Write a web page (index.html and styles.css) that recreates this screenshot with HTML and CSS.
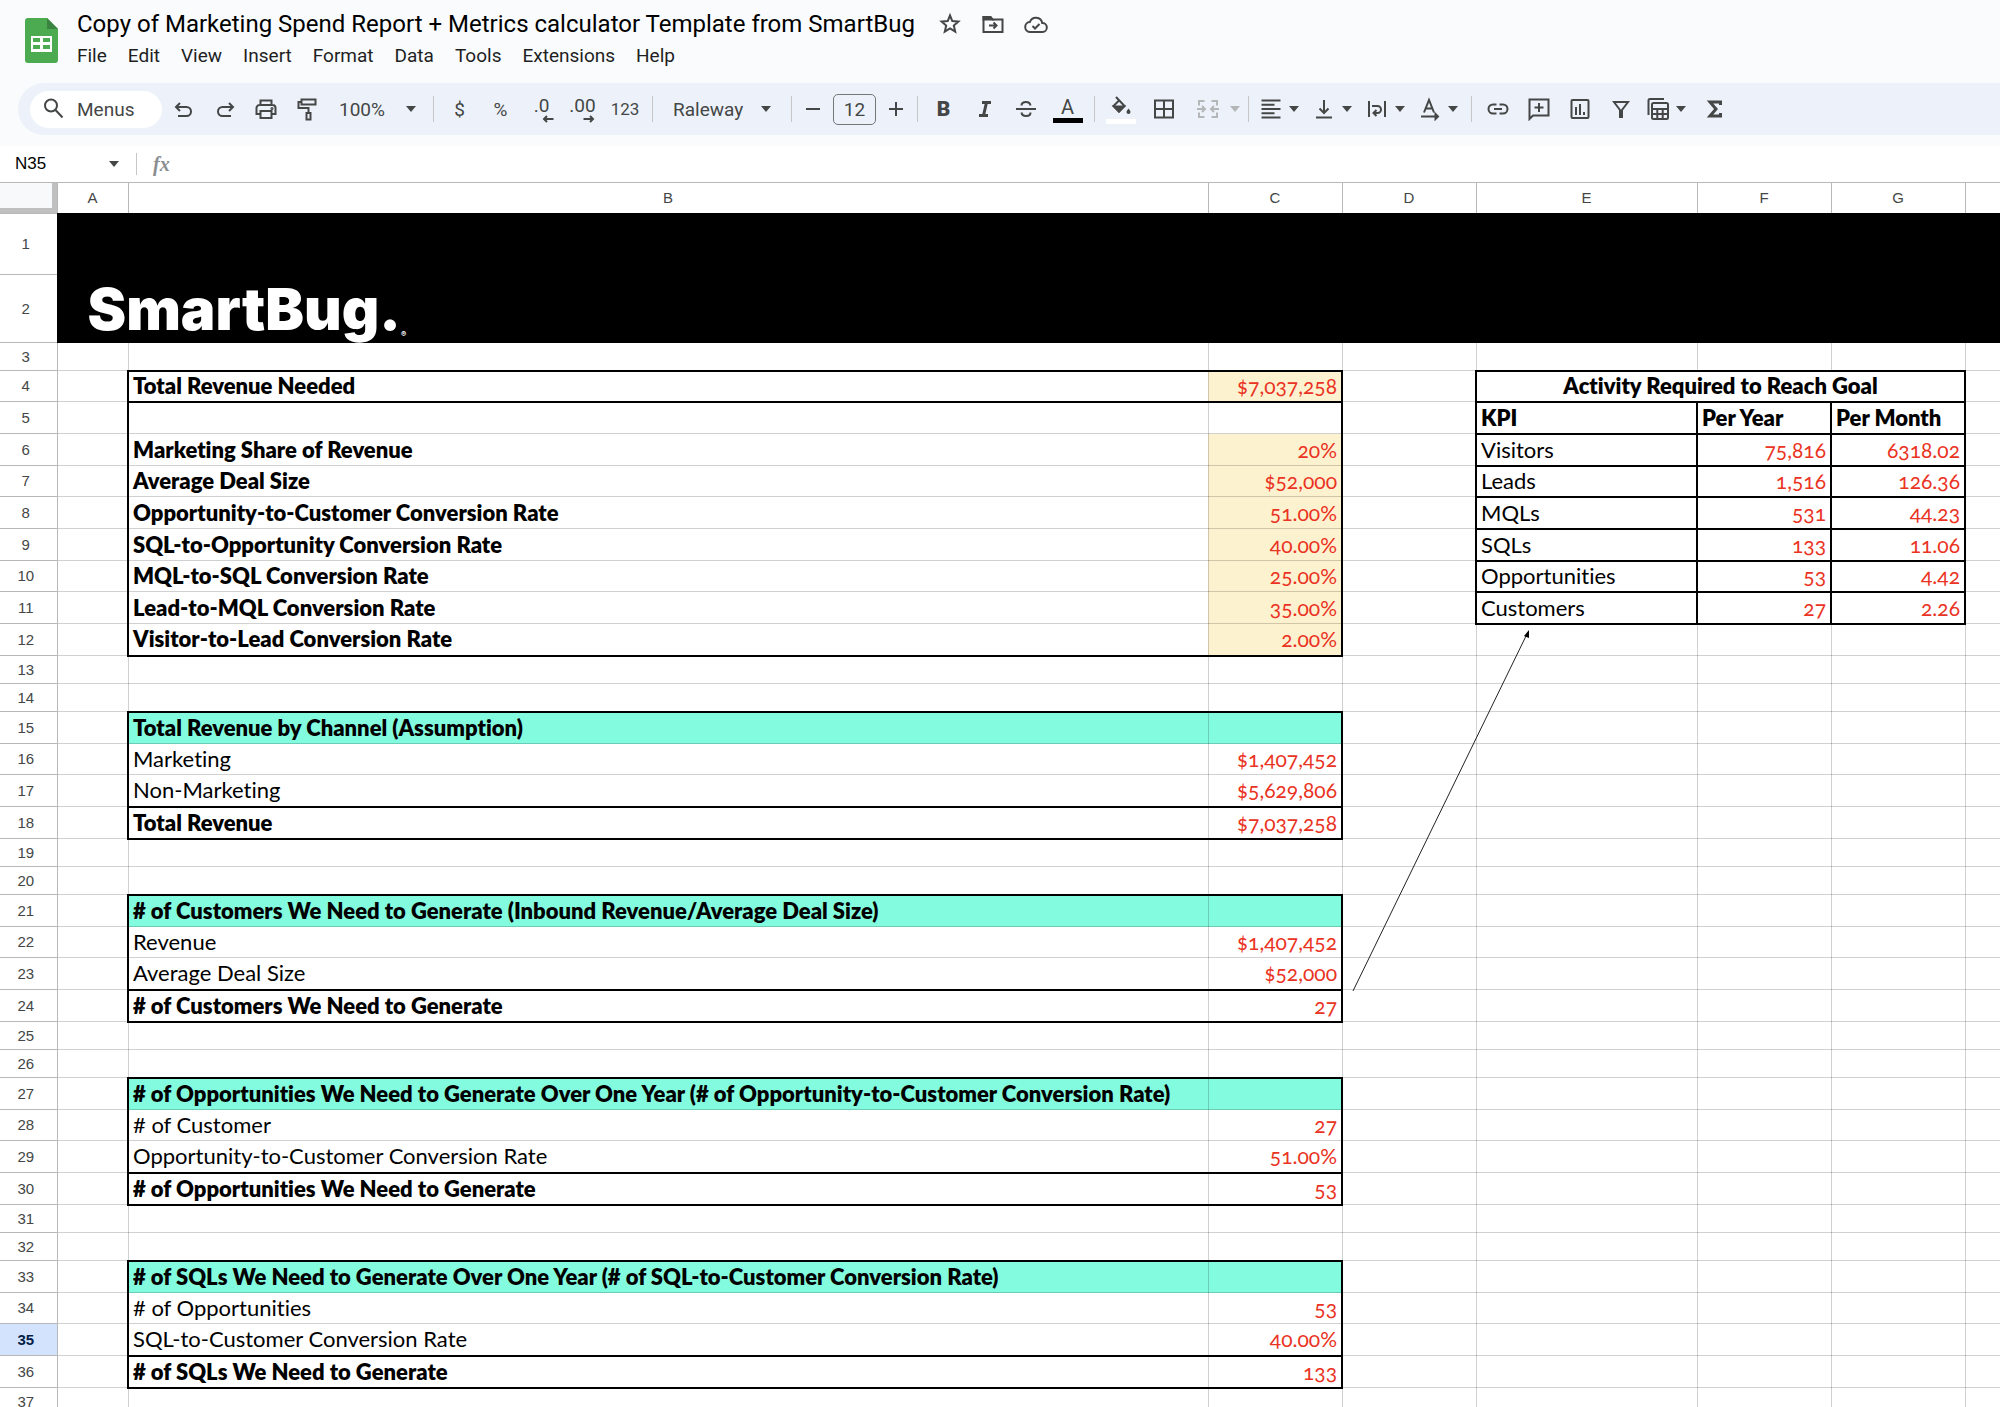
FILE: index.html
```html
<!DOCTYPE html>
<html lang="en">
<head>
<meta charset="utf-8">
<title>Copy of Marketing Spend Report + Metrics calculator Template from SmartBug</title>
<link rel="stylesheet" href="styles.css">
</head>
<body>
<svg class="defs" aria-hidden="true"><symbol id="caret" viewBox="0 0 10 6"><path d="M0 0h10L5 6z" fill="currentColor"/></symbol></svg>
<div class="app">
<header class="top">
  <svg class="doc-logo" viewBox="0 0 33 45" aria-hidden="true"><path d="M3 0h19l11 11v31a3 3 0 0 1-3 3H3a3 3 0 0 1-3-3V3a3 3 0 0 1 3-3z" fill="#4caa50"/><path d="M22 0l11 11H22z" fill="#3a8340"/><path d="M6 18h21v16H6z" fill="#fff"/><path d="M8 20h7v4H8zM18 20h7v4h-7zM8 27h7v4H8zM18 27h7v4h-7z" fill="#4caa50"/></svg>
  <div class="top-main">
    <div class="title-row">
      <h1>Copy of Marketing Spend Report + Metrics calculator Template from SmartBug</h1>
      <button class="mini" aria-label="Star"><svg viewBox="0 0 24 24"><path d="M12 3.500l2.300 5.600 6.100.5-4.600 4 1.400 6-5.200-3.200-5.200 3.200 1.400-6-4.600-4 6.100-.5z"/></svg></button>
      <button class="mini" aria-label="Move"><svg viewBox="0 0 24 24"><path d="M2.500 20V5h7l2 2.500h10V20z"/><path d="M2.500 5h7l2 2.500h-9z" fill="currentColor"/><path d="M8 13.500h7M12.500 10.500l3 3-3 3"/></svg></button>
      <button class="mini" aria-label="Saved to Drive"><svg viewBox="0 0 24 24"><path d="M6.500 20a5 5 0 0 1-.6-10A6.400 6.400 0 0 1 18.200 11a4.500 4.500 0 0 1 .3 9z"/><path d="M8.500 14l2.500 2.500 4.500-4.500"/></svg></button>
    </div>
    <nav class="menu"><button>File</button><button>Edit</button><button>View</button><button>Insert</button><button>Format</button><button>Data</button><button>Tools</button><button>Extensions</button><button>Help</button></nav>
  </div>
</header>

<div class="toolbar" role="toolbar">
  <label class="search"><svg viewBox="0 0 24 24"><circle cx="9" cy="8.500" r="6"/><path d="M13.500 13l7 7.500"/></svg><input type="text" placeholder="Menus" aria-label="Menus"></label>
  <button aria-label="Undo"><svg viewBox="0 0 24 24"><path d="M8 6L4 10l4 4M4.500 10h10a4.500 4.500 0 0 1 0 9H6"/></svg></button>
  <button aria-label="Redo"><svg viewBox="0 0 24 24"><path d="M16 6l4 4-4 4M19.500 10h-10a4.500 4.500 0 0 0 0 9H18"/></svg></button>
  <button aria-label="Print"><svg viewBox="0 0 24 24"><path d="M6.500 8V3.500h11V8M6.500 17H2.500v-6a3 3 0 0 1 3-3h13a3 3 0 0 1 3 3v6h-4M6.500 14h11v7h-11z"/><circle cx="18" cy="11.500" r=".6"/></svg></button>
  <button aria-label="Paint format"><svg viewBox="0 0 24 24"><path d="M6.500 2.500h14v5h-14zM6.500 5H3.500v6h10v4.500M11.500 16h4v6.500h-4z"/></svg></button>
  <span class="pick zoom"><select aria-label="Zoom"><option>100%</option></select><svg class="caret"><use href="#caret"/></svg></span>
  <i class="sep"></i>
  <button aria-label="Format as currency">$</button>
  <button aria-label="Format as percent">%</button>
  <button class="dec" aria-label="Decrease decimal places">.0<svg viewBox="0 0 12 8"><path d="M11.500 4H2M5 1L2 4l3 3"/></svg></button>
  <button class="dec" aria-label="Increase decimal places">.00<svg viewBox="0 0 12 8"><path d="M.5 4H10M7 1l3 3-3 3"/></svg></button>
  <button class="num" aria-label="More formats">123</button>
  <i class="sep"></i>
  <span class="pick font"><select aria-label="Font"><option>Raleway</option></select><svg class="caret"><use href="#caret"/></svg></span>
  <i class="sep"></i>
  <button class="step" aria-label="Decrease font size"><svg viewBox="0 0 24 24"><path d="M5 12h14"/></svg></button>
  <input class="size" type="text" value="12" aria-label="Font size">
  <button class="step" aria-label="Increase font size"><svg viewBox="0 0 24 24"><path d="M5 12h14M12 5v14"/></svg></button>
  <i class="sep"></i>
  <button class="bold" aria-label="Bold">B</button>
  <button aria-label="Italic"><svg viewBox="0 0 24 24" class="heavy"><path d="M9 5.500h9M6 18.500h9M13.500 5.500l-3 13"/></svg></button>
  <button aria-label="Strikethrough"><svg viewBox="0 0 24 24"><path d="M2 12h20M16.500 8.500c-.3-2-2-3.500-4.500-3.500S7.500 6.300 7.500 8.500M7.500 15.500c.3 2 2 3.500 4.500 3.500s4.500-1.300 4.500-3.500"/></svg></button>
  <button class="ink" aria-label="Text color">A</button>
  <i class="sep"></i>
  <button class="fill" aria-label="Fill color"><svg viewBox="0 0 24 24"><path d="M7 2l8.500 9-5.500 5.500L4.500 11 10 5.500"/><path d="M5 11.500h10L10 16.500z" fill="currentColor"/><path d="M19.500 13.500c1.500 2 2 2.800 2 3.500a2 2 0 0 1-4 0c0-.7.5-1.500 2-3.500z" fill="currentColor" stroke="none"/></svg></button>
  <button class="borders" aria-label="Borders"><svg viewBox="0 0 24 24"><path d="M3 3.500h18v17H3zM12 3.500v17M3 12h18"/></svg></button>
  <button class="wide merge" aria-label="Merge cells" disabled><svg viewBox="0 0 24 24"><path d="M8.500 4H3v4.500M15.500 4H21v4.500M8.500 20H3v-4.500M15.500 20H21v-4.500M1 12h8M6 9l3 3-3 3M23 12h-8M18 9l-3 3 3 3"/></svg><svg class="caret"><use href="#caret"/></svg></button>
  <i class="sep"></i>
  <button class="wide" aria-label="Horizontal align"><svg viewBox="0 0 24 24"><path d="M2.500 3.500h19M2.500 7.800h13M2.500 12h19M2.500 16.300h13M2.500 20.500h19"/></svg><svg class="caret"><use href="#caret"/></svg></button>
  <button class="wide" aria-label="Vertical align"><svg viewBox="0 0 24 24"><path d="M4 20.500h16M12 3v13M7.500 11.500L12 16l4.500-4.500"/></svg><svg class="caret"><use href="#caret"/></svg></button>
  <button class="wide" aria-label="Text wrapping"><svg viewBox="0 0 24 24"><path d="M4 4v16M20 4v16M7 9h5.500a3.500 3.500 0 0 1 0 7H9M11.500 13l-3 3 3 3"/></svg><svg class="caret"><use href="#caret"/></svg></button>
  <button class="wide" aria-label="Text rotation"><svg viewBox="0 0 24 24"><path d="M6 15.500L11 3l5 12.500M7.500 11.500h7M3 19.500h17M17.500 17l2.500 2.500-2.500 2.500z"/></svg><svg class="caret"><use href="#caret"/></svg></button>
  <i class="sep"></i>
  <button aria-label="Insert link"><svg viewBox="0 0 24 24"><path d="M10.500 7.500H7a4.500 4.500 0 0 0 0 9h3.500M13.500 7.500H17a4.500 4.500 0 0 1 0 9h-3.500M8 12h8"/></svg></button>
  <button aria-label="Insert comment"><svg viewBox="0 0 24 24"><path d="M2.500 22V2.500h19v16H6zM12 6v9M7.500 10.500h9"/></svg></button>
  <button aria-label="Insert chart"><svg viewBox="0 0 24 24"><rect x="3.500" y="3" width="17" height="18" rx="1"/><path d="M8 10v8M12 7v11M16 15v3"/></svg></button>
  <button aria-label="Create a filter"><svg viewBox="0 0 24 24"><path d="M5 5h14l-6 8v7h-2v-7z"/></svg></button>
  <button class="wide" aria-label="Filter views"><svg viewBox="0 0 24 24"><path d="M2.500 18V3.500a1.500 1.500 0 0 1 1.500-1.500H18"/><rect x="6" y="6" width="16" height="16" rx="1.500"/><path d="M6 12h16M6 17h16M11.300 12v10M16.700 12v10"/></svg><svg class="caret"><use href="#caret"/></svg></button>
  <button aria-label="Functions"><svg viewBox="0 0 24 24" class="heavy"><path d="M17.500 8V5H7l6 7-6 7h10.500v-3"/></svg></button>
</div>

<div class="formula">
  <input class="name" type="text" value="N35" aria-label="Name box"><svg class="caret"><use href="#caret"/></svg>
  <label for="fx">fx</label><input id="fx" type="text">
</div>

<main class="sheet">
<table>
<colgroup><col class="c-n"><col class="c-a"><col class="c-b"><col class="c-c"><col class="c-c"><col class="c-e"><col class="c-c"><col class="c-c"><col></colgroup>
<thead><tr><th class="corner"></th><th>A</th><th>B</th><th>C</th><th>D</th><th>E</th><th>F</th><th>G</th><th></th></tr></thead>
<tbody>
<tr class="r1"><th>1</th><td class="banner" colspan="8"></td></tr>
<tr class="r2"><th>2</th><td class="banner" colspan="8"><div class="brand">SmartBug.<small>®</small></div></td></tr>
<tr class="s"><th>3</th><td></td><td></td><td></td><td></td><td></td><td></td><td></td><td></td></tr>
<tr class="k"><th>4</th><td></td><td class="b l t u">Total Revenue Needed</td><td class="v y r t u">$7,037,258</td><td></td><td class="b box mid" colspan="3">Activity Required to Reach Goal</td><td></td></tr>
<tr><th>5</th><td></td><td class="l"></td><td class="r"></td><td></td><td class="b box">KPI</td><td class="b box">Per Year</td><td class="b box">Per Month</td><td></td></tr>
<tr><th>6</th><td></td><td class="b l">Marketing Share of Revenue</td><td class="v y r">20%</td><td></td><td class="box">Visitors</td><td class="v box">75,816</td><td class="v box">6318.02</td><td></td></tr>
<tr class="k"><th>7</th><td></td><td class="b l">Average Deal Size</td><td class="v y r">$52,000</td><td></td><td class="box">Leads</td><td class="v box">1,516</td><td class="v box">126.36</td><td></td></tr>
<tr><th>8</th><td></td><td class="b l">Opportunity-to-Customer Conversion Rate</td><td class="v y r">51.00%</td><td></td><td class="box">MQLs</td><td class="v box">531</td><td class="v box">44.23</td><td></td></tr>
<tr><th>9</th><td></td><td class="b l">SQL-to-Opportunity Conversion Rate</td><td class="v y r">40.00%</td><td></td><td class="box">SQLs</td><td class="v box">133</td><td class="v box">11.06</td><td></td></tr>
<tr class="k"><th>10</th><td></td><td class="b l">MQL-to-SQL Conversion Rate</td><td class="v y r">25.00%</td><td></td><td class="box">Opportunities</td><td class="v box">53</td><td class="v box">4.42</td><td></td></tr>
<tr><th>11</th><td></td><td class="b l">Lead-to-MQL Conversion Rate</td><td class="v y r">35.00%</td><td></td><td class="box">Customers</td><td class="v box">27</td><td class="v box">2.26</td><td></td></tr>
<tr><th>12</th><td></td><td class="b l u">Visitor-to-Lead Conversion Rate</td><td class="v y r u">2.00%</td><td></td><td></td><td></td><td></td><td></td></tr>
<tr class="s"><th>13</th><td></td><td></td><td></td><td></td><td></td><td></td><td></td><td></td></tr>
<tr class="s"><th>14</th><td></td><td></td><td></td><td></td><td></td><td></td><td></td><td></td></tr>
<tr><th>15</th><td></td><td class="b g l t">Total Revenue by Channel (Assumption)</td><td class="g r t"></td><td></td><td></td><td></td><td></td><td></td></tr>
<tr class="k"><th>16</th><td></td><td class="l">Marketing</td><td class="v r">$1,407,452</td><td></td><td></td><td></td><td></td><td></td></tr>
<tr><th>17</th><td></td><td class="l">Non-Marketing</td><td class="v r">$5,629,806</td><td></td><td></td><td></td><td></td><td></td></tr>
<tr><th>18</th><td></td><td class="b l t u">Total Revenue</td><td class="v r t u">$7,037,258</td><td></td><td></td><td></td><td></td><td></td></tr>
<tr class="s"><th>19</th><td></td><td></td><td></td><td></td><td></td><td></td><td></td><td></td></tr>
<tr class="s"><th>20</th><td></td><td></td><td></td><td></td><td></td><td></td><td></td><td></td></tr>
<tr><th>21</th><td></td><td class="b g l t"># of Customers We Need to Generate (Inbound Revenue/Average Deal Size)</td><td class="g r t"></td><td></td><td></td><td></td><td></td><td></td></tr>
<tr class="k"><th>22</th><td></td><td class="l">Revenue</td><td class="v r">$1,407,452</td><td></td><td></td><td></td><td></td><td></td></tr>
<tr><th>23</th><td></td><td class="l">Average Deal Size</td><td class="v r">$52,000</td><td></td><td></td><td></td><td></td><td></td></tr>
<tr><th>24</th><td></td><td class="b l t u"># of Customers We Need to Generate</td><td class="v r t u">27</td><td></td><td></td><td></td><td></td><td></td></tr>
<tr class="s"><th>25</th><td></td><td></td><td></td><td></td><td></td><td></td><td></td><td></td></tr>
<tr class="s"><th>26</th><td></td><td></td><td></td><td></td><td></td><td></td><td></td><td></td></tr>
<tr><th>27</th><td></td><td class="b g l t"># of Opportunities We Need to Generate Over One Year (# of Opportunity-to-Customer Conversion Rate)</td><td class="g r t"></td><td></td><td></td><td></td><td></td><td></td></tr>
<tr class="k"><th>28</th><td></td><td class="l"># of Customer</td><td class="v r">27</td><td></td><td></td><td></td><td></td><td></td></tr>
<tr><th>29</th><td></td><td class="l">Opportunity-to-Customer Conversion Rate</td><td class="v r">51.00%</td><td></td><td></td><td></td><td></td><td></td></tr>
<tr><th>30</th><td></td><td class="b l t u"># of Opportunities We Need to Generate</td><td class="v r t u">53</td><td></td><td></td><td></td><td></td><td></td></tr>
<tr class="s"><th>31</th><td></td><td></td><td></td><td></td><td></td><td></td><td></td><td></td></tr>
<tr class="s"><th>32</th><td></td><td></td><td></td><td></td><td></td><td></td><td></td><td></td></tr>
<tr><th>33</th><td></td><td class="b g l t"># of SQLs We Need to Generate Over One Year (# of SQL-to-Customer Conversion Rate)</td><td class="g r t"></td><td></td><td></td><td></td><td></td><td></td></tr>
<tr class="k"><th>34</th><td></td><td class="l"># of Opportunities</td><td class="v r">53</td><td></td><td></td><td></td><td></td><td></td></tr>
<tr><th class="active">35</th><td></td><td class="l">SQL-to-Customer Conversion Rate</td><td class="v r">40.00%</td><td></td><td></td><td></td><td></td><td></td></tr>
<tr><th>36</th><td></td><td class="b l t u"># of SQLs We Need to Generate</td><td class="v r t u">133</td><td></td><td></td><td></td><td></td><td></td></tr>
<tr class="s"><th>37</th><td></td><td></td><td></td><td></td><td></td><td></td><td></td><td></td></tr>
</tbody>
</table>
<svg class="arrow" viewBox="0 0 178 362" aria-hidden="true"><path d="M1 361L175 4" stroke="#222" stroke-width="1"/><path d="M177 0v8l-5-2z" fill="#000"/></svg>
</main>
</div>
</body>
</html>
```
FILE: styles.css
```css
* { box-sizing: border-box; }
html, body { margin: 0; height: 100%; }
body { font-family: Roboto, "Liberation Sans", sans-serif; color: #444746; background: #fff; }
.defs { display: none; }
.app { height: 100vh; display: flex; flex-direction: column; overflow: hidden; }
button, input, select { font: inherit; color: inherit; background: none; border: 0; padding: 0; margin: 0; outline: 0; }
button svg, .search svg { width: 24px; height: 24px; fill: none; stroke: currentColor; stroke-width: 2; flex: none; }
button .heavy { stroke-width: 3; }
svg.caret { width: 10px; height: 6px; stroke: none; flex: none; }

.top { display: flex; flex: none; height: 83px; background: #f9fbfd; padding-left: 25px; gap: 19px; }
.doc-logo { width: 33px; height: 45px; margin-top: 18px; flex: none; }
.title-row { display: flex; align-items: center; height: 44px; padding-top: 4px; gap: 19px; }
h1 { margin: 0 4px 0 0; font-size: 24px; line-height: 32px; font-weight: 400; color: #000; white-space: nowrap; }
.mini { display: flex; }
.menu { display: flex; gap: 21px; font-size: 19px; line-height: 24px; color: #1f1f1f; }

.toolbar { display: flex; align-items: center; flex: none; height: 63px; padding-left: 30px; background: #f9fbfd; position: relative; z-index: 0; font-size: 19px; padding-bottom: 11px; }
.toolbar::before { content: ""; position: absolute; z-index: -1; inset: 0 0 11px 18px; background: #edf2fa; border-radius: 26px 0 0 26px; }
.toolbar > * { flex: none; }
.toolbar button { width: 41px; height: 40px; display: flex; align-items: center; justify-content: center; }
.search { display: flex; align-items: center; gap: 11px; width: 132px; height: 37px; margin-right: 1px; padding-left: 12px; border-radius: 19px; background: #fff; }
.search input { width: 70px; }
.search input::placeholder { color: #444746; opacity: 1; }
.pick { display: flex; align-items: center; position: relative; height: 40px; }
.pick select { appearance: none; width: 100%; height: 40px; }
.pick .caret { position: absolute; right: 15px; pointer-events: none; }
.zoom { width: 101px; padding-left: 12px; }
.toolbar .zoom .caret { right: 12px; }
.font { width: 128px; padding-left: 15px; }
.sep { width: 1px; height: 26px; margin: 0 5px; background: #c7c7c7; }
.toolbar .dec { position: relative; align-items: flex-start; padding-top: 5px; }
.toolbar .dec svg { position: absolute; right: 8px; bottom: 6px; width: 12px; height: 8px; }
.toolbar .num { width: 44px; font-size: 17px; }
.toolbar .step { width: 32px; }
.size { width: 43px; height: 31px; margin: 0 4px; border: 1px solid #747775; border-radius: 5px; text-align: center; }
.toolbar .bold { font-weight: 900; font-size: 21px; }
.toolbar .ink { width: 43px; flex-direction: column; font-size: 20px; line-height: 22px; }
.ink::after { content: ""; width: 30px; height: 5px; background: #000; }
.toolbar .fill { flex-direction: column; }
.fill::after { content: ""; width: 30px; height: 5px; background: #fff; }
.toolbar .borders { width: 45px; }
.toolbar .wide { width: 53px; gap: 6px; justify-content: flex-start; padding-left: 5px; }
.toolbar .merge { width: 57px; gap: 10px; padding-left: 10px; color: #b4b6b8; }

.formula { display: flex; align-items: center; flex: none; height: 36px; font-size: 17px; }
.name { width: 109px; padding-left: 15px; color: #000; font-family: "Liberation Sans", sans-serif; }
.formula label { margin-left: 17px; padding-left: 16px; border-left: 1px solid #c7c7c7; color: #8b8e91; font: italic 700 20px/22px "Liberation Serif", serif; }
#fx { flex: 1; margin-left: 12px; }

.sheet { position: relative; flex: 1; min-height: 0; overflow: hidden; }
table { width: 100%; table-layout: fixed; border-collapse: collapse; font-family: Lato, sans-serif; font-size: 22px; line-height: 24px; font-variant-ligatures: none; color: #000; }
.c-n { width: 57px; } .c-a { width: 71px; } .c-b { width: 1080px; } .c-c { width: 134px; } .c-e { width: 221px; }
tr { height: 32px; }
.k { height: 31px; }
.s { height: 28px; }
.r1 { height: 61px; }
.r2 { height: 68px; }
thead tr { height: 31px; }
td, th { padding: 0 4px; border: 1px solid rgba(0, 0, 0, .18); white-space: nowrap; vertical-align: middle; text-align: left; }
th { padding: 0; border-color: #b8b8b8; font: 400 15px/20px "Liberation Sans", sans-serif; color: #444746; text-align: center; }
tr > :first-child { border-left: 0; padding-right: 5px; }
tr > :last-child { border-right: 0; }
.corner { background: #f8f9fa; box-shadow: inset -5px -5px #c0c0c0; }
.active { background: #d3e3fd; color: #041e49; font-weight: 700; }
.banner { background: #000; border: 1px double #000; padding: 0; }
.brand { display: flex; align-items: flex-end; padding-left: 30px; height: 60px; color: #fff; font: 900 58px/60px Inter, sans-serif; }
.brand small { font-size: 8px; line-height: 10px; }
.b { font-weight: 800; }
.v { color: #ea3323; font-size: 21px; text-align: right; font-variant-numeric: oldstyle-nums; }
.y { background: #fdf2d0; }
.g { background: #83fbdf; }
.mid { text-align: center; }
.l { border-left: 2px solid #000; }
.r { border-right: 2px solid #000; }
.t { border-top: 2px solid #000; }
.u { border-bottom: 2px solid #000; }
.box { border: 2px solid #000; }
td:not(.box, .banner) { padding-top: 0; padding-bottom: 0; }
.arrow { position: absolute; left: 1352px; top: 448px; width: 178px; height: 362px; fill: none; }
```
